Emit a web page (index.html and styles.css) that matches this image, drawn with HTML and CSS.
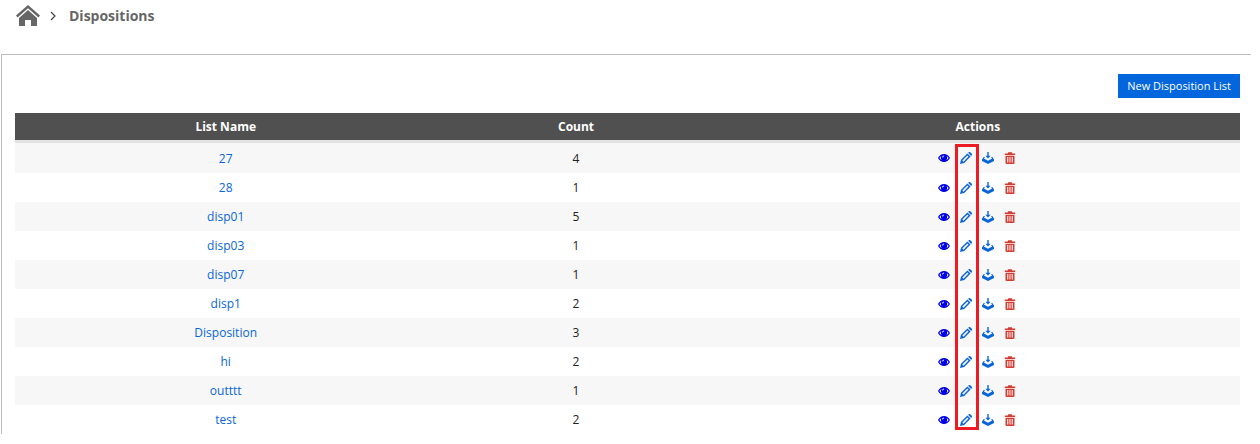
FILE: index.html
```html
<!DOCTYPE html>
<html lang="en">
<head>
<meta charset="utf-8">
<title>Dispositions</title>
<link rel="stylesheet" href="styles.css">
</head>
<body>
<svg class="sprite" aria-hidden="true">
  <symbol id="eye" viewBox="0 0 12 12">
    <path fill-rule="evenodd" d="M0 6C1.400 3.300 3.500 2 6 2s4.600 1.300 6 4C10.600 8.700 8.500 10 6 10S1.400 8.700 0 6zM1.400 6c.6 1 1.400 1.700 2.300 2.200C2.700 7.100 2.500 5.200 3.400 3.900 2.600 4.400 1.900 5.100 1.400 6zM10.600 6c-.6 1-1.400 1.700-2.300 2.200 1-1.100 1.200-3 .3-4.300.8.5 1.500 1.200 2 2.100zM4.200 5.500h.9c0-.6.4-1 1-1v-.9c-1.100 0-1.900.8-1.900 1.900z"/>
  </symbol>
  <symbol id="pencil" viewBox="0 0 12 12">
    <path fill-rule="evenodd" d="M0 12l1-4.200L7.400 1.400l3.200 3.200L4.200 11zM2.300 8.500l1.200 1.200 5-5.100-1.100-1.100zM8.100.8l.4-.4c.6-.6 1.400-.6 2 0l1.100 1.100c.6.6.6 1.400 0 2l-.4.400z"/>
  </symbol>
  <symbol id="download" viewBox="0 0 12 12">
    <path d="M5.300 0h1.400v3.700h1.900L6 6.600 3.400 3.700h1.900zM3 4.900L1.900 6.600 6 8.700l4.100-2.100L9 4.900l1.300.2L12 7.400v1.700L6 12 0 9.100V7.400l1.700-2.300z"/>
  </symbol>
  <symbol id="trash" viewBox="0 0 12 12">
    <path d="M.8 1.500h2.900L4.200.3h3.600l.5 1.200h2.900v1.500H.8z"/>
    <path fill-rule="evenodd" d="M1.500 3.700h9v7c0 .8-.4 1.200-1.200 1.200H2.700c-.8 0-1.200-.4-1.200-1.200zM3.200 5v5.400h1.100V5zM5.500 5v5.400h1V5zM7.700 5v5.400h1.100V5z"/>
  </symbol>
</svg>

<nav class="breadcrumb" aria-label="Breadcrumb">
  <a class="home" href="#" aria-label="Home">
    <svg viewBox="0 0 24 22"><path d="M12 0l12 10.600-1.500 1.800L12 3.200 1.500 12.400 0 10.600z"/><path d="M12 5l9 7.900V21h-6v-6H9v6H3v-8.100z"/></svg>
  </a>
  <svg class="chevron" viewBox="0 0 6 10"><path d="M1 1l4 4-4 4"/></svg>
  <h1 class="title">Dispositions</h1>
</nav>

<main class="panel">
  <div class="toolbar"><button class="new-list" type="button">New Disposition List</button></div>
  <table class="lists">
    <thead><tr><th class="col-name">List Name</th><th class="col-count">Count</th><th class="col-actions">Actions</th></tr></thead>
    <tbody id="rows"></tbody>
  </table>
</main>
<script src="script.js"></script>
</body>
</html>
```
FILE: styles.css
```css
body {
  margin: 0;
  background: #fff;
  color: #222;
  font: 12px/16px "Open Sans", "Noto Sans", sans-serif;
}
a { color: #0a66d6; text-decoration: none; }
.sprite { display: none; }

.breadcrumb {
  display: flex;
  align-items: center;
  height: 32px;
  padding-left: 16px;
  color: #666;
}
.home { width: 24px; height: 22px; color: #666; }
.home svg { display: block; fill: currentColor; }
.chevron {
  width: 6px;
  height: 10px;
  margin: 0 13px 0 10px;
  fill: none;
  stroke: #444;
  stroke-width: 1.2;
}
.title { margin: 0; font-size: 14px; line-height: 20px; font-weight: 700; }

.panel {
  margin: 22px 9px 0 1px;
  padding: 19px 11px 0 13px;
  border-top: 1px solid #bbb;
  border-left: 1px solid #bbb;
}
.toolbar { display: flex; justify-content: flex-end; margin-bottom: 15px; }
.new-list {
  height: 24px;
  padding: 0 9px;
  border: 0;
  background: #0366dc;
  color: #fff;
  font: 11px/16px "Open Sans", "Noto Sans", sans-serif;
}

.lists { width: 100%; border-collapse: separate; border-spacing: 0; table-layout: fixed; text-align: center; }
.lists th {
  height: 27px;
  padding: 0;
  background: #505050;
  border-bottom: 3px solid #e3e3e3;
  color: #fff;
  font-size: 12px;
  font-weight: 700;
}
.col-name { width: 34.4%; }
.col-count { width: 22.8%; }
.lists td { box-sizing: border-box; height: 29px; padding: 1px 0 0; }
.lists tbody tr:first-child td { height: 30px; }
.lists tbody tr:nth-child(odd) { background: #f7f7f7; }

.lists .actions-cell { padding: 0 2px 0 0; }
.actions { display: flex; justify-content: center; gap: 10px; }
.icon {
  position: relative;
  width: 12px;
  height: 12px;
  padding: 0;
  border: 0;
  background: none;
  color: #0a66d6;
}
.icon svg { display: block; width: 12px; height: 12px; fill: currentColor; }
.icon-eye { color: #0000e6; }
.icon-trash { color: #d33c32; }

/* Outline round the edit buttons of every row */
.highlight {
  position: absolute;
  top: -8px;
  left: -5px;
  box-sizing: border-box;
  width: 24px;
  height: 286px;
  border: 3px solid #ed1c24;
  pointer-events: none;
}
```
FILE: script.js
```js
const lists = [["27", 4], ["28", 1], ["disp01", 5], ["disp03", 1], ["disp07", 1],
  ["disp1", 2], ["Disposition", 3], ["hi", 2], ["outttt", 1], ["test", 2]];
const actions = [["eye", "View"], ["pencil", "Edit"], ["download", "Download"], ["trash", "Delete"]];

document.getElementById("rows").innerHTML = lists.map(([name, count], row) => {
  const buttons = actions.map(([icon, label]) => {
    const mark = row === 0 && icon === "pencil" ? '<span class="highlight"></span>' : "";
    return `<button class="icon icon-${icon}" type="button" aria-label="${label} ${name}"><svg><use href="#${icon}"/></svg>${mark}</button>`;
  }).join("");
  return `<tr><td><a href="#">${name}</a></td><td>${count}</td><td class="actions-cell"><div class="actions">${buttons}</div></td></tr>`;
}).join("");
```
